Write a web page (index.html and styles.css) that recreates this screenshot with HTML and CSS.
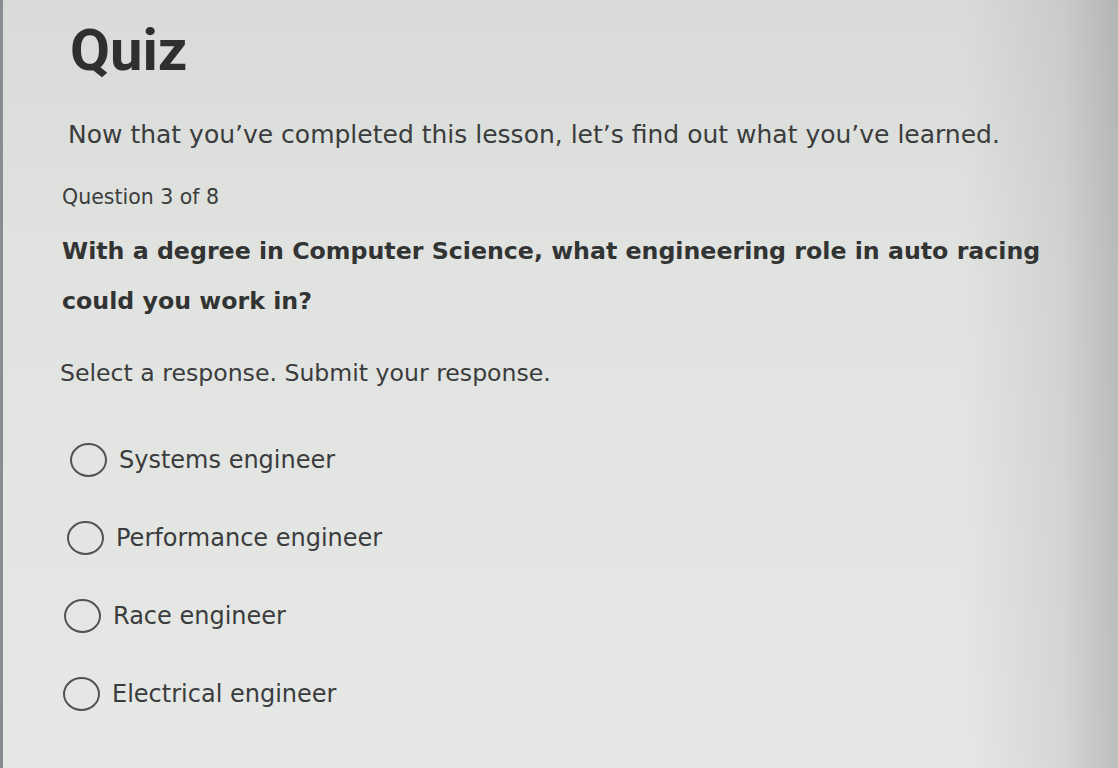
FILE: index.html
```html
<!DOCTYPE html>
<html lang="en">
<head>
<meta charset="utf-8">
<title>Quiz</title>
<link rel="stylesheet" href="styles.css">
</head>
<body>
<main class="screen">
  <h1 class="title">Quiz</h1>
  <p class="intro">Now that you’ve completed this lesson, let’s find out what you’ve learned.</p>
  <p class="counter">Question 3 of 8</p>
  <p class="question">With a degree in Computer Science, what engineering role in auto racing could you work in?</p>
  <p class="instruction">Select a response. Submit your response.</p>
  <ul class="options">
    <li class="option o1"><span class="radio"></span><span class="label">Systems engineer</span></li>
    <li class="option o2"><span class="radio"></span><span class="label">Performance engineer</span></li>
    <li class="option o3"><span class="radio"></span><span class="label">Race engineer</span></li>
    <li class="option o4"><span class="radio"></span><span class="label">Electrical engineer</span></li>
  </ul>
</main>
</body>
</html>
```
FILE: styles.css
```css
html, body {
  margin: 0;
  padding: 0;
  height: 100%;
}
body {
  font-family: "DejaVu Sans", Roboto, sans-serif;
  color: #3b3d3d;
  background: #dfe1de;
  overflow: hidden;
}
.screen {
  box-sizing: border-box;
  height: 768px;
  border-left: 3px solid #8a8d90;
  padding: 18px 0 0 0;
  background:
    linear-gradient(to right, rgba(0,0,0,0) 0%, rgba(0,0,0,0) 86%, rgba(90,92,90,0.12) 95%, rgba(70,72,70,0.26) 100%),
    linear-gradient(to bottom, #d9dbd8 0%, #e1e3e0 35%, #e6e8e5 100%);
}
.title {
  margin: 0 0 0 67px;
  font-family: Roboto, "DejaVu Sans", sans-serif;
  font-size: 58px;
  font-weight: 700;
  line-height: 64px;
  color: #2e3030;
}
.intro {
  margin: 38px 0 0 65px;
  font-size: 25px;
  line-height: 30px;
  color: #3a3c3d;
}
.counter {
  margin: 35px 0 0 59px;
  font-size: 20.5px;
  line-height: 24px;
  color: #3a3c3d;
}
.question {
  margin: 17px 0 0 59px;
  width: 1010px;
  font-size: 23.7px;
  font-weight: 700;
  line-height: 50px;
  color: #323434;
}
.instruction {
  margin: 32px 0 0 57px;
  font-size: 23.6px;
  line-height: 30px;
  color: #3a3c3d;
}
.options {
  list-style: none;
  margin: 55px 0 0 0;
  padding: 0;
  display: flex;
  flex-direction: column;
  gap: 44px;
}
.option {
  display: flex;
  align-items: center;
  gap: 12px;
  height: 34px;
}
.o1 { padding-left: 67px; }
.o2 { padding-left: 64px; }
.o3 { padding-left: 61px; }
.o4 { padding-left: 60px; }
.radio {
  box-sizing: border-box;
  width: 37px;
  height: 34px;
  border: 2px solid #505253;
  border-radius: 50%;
  flex: none;
}
.label {
  font-size: 24px;
  line-height: 28px;
  color: #3a3c3d;
}
```
